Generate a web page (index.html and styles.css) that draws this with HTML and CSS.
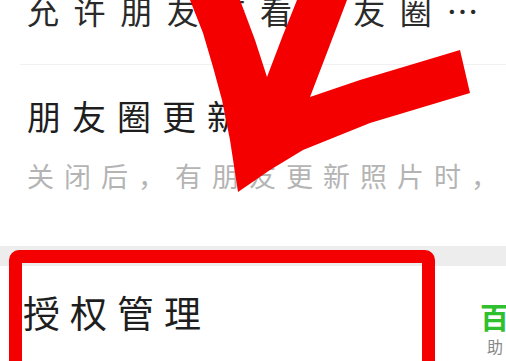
FILE: index.html
```html
<!DOCTYPE html>
<html lang="zh-CN">
<head>
<meta charset="utf-8">
<title>朋友圈设置</title>
<link rel="stylesheet" href="styles.css">
</head>
<body>
<div class="page">
  <section class="group">
    <div class="row row-first">
      <div class="row-text">允许朋友查看朋友圈…</div>
    </div>
    <div class="row row-second">
      <div class="title">朋友圈更新提醒</div>
      <div class="subtitle">关闭后，有朋友更新照片时，</div>
    </div>
  </section>
  <div class="gap"></div>
  <section class="group group-auth">
    <div class="auth-row">
      <div class="auth-title">授权管理</div>
      <div class="brand">
        <span class="brand-main">百</span>
        <span class="brand-sub">助</span>
      </div>
    </div>
  </section>

  <div class="mark-box"></div>
  <svg class="mark-arrow" width="506" height="361" viewBox="0 0 506 361" aria-hidden="true">
    <polygon points="190,0 203,33 213,67 222,100 230,140 238,192 270,170 303,150 370,123 470,93 460,50 400,68 360,80 310,97 328,50 347,0 297,0 283,35 267,77 255,40 240,0" />
  </svg>
</div>
</body>
</html>
```

FILE: styles.css
```css
* { box-sizing: border-box; }
html, body {
  margin: 0;
  padding: 0;
  width: 506px;
  height: 361px;
  overflow: hidden;
  background: #ffffff;
  font-family: "Noto Sans CJK SC", "Noto Sans", sans-serif;
}
.page {
  position: relative;
  width: 506px;
  height: 361px;
  overflow: hidden;
}
.group {
  background: #fff;
}
.row {
  padding-left: 27px;
  white-space: nowrap;
  overflow: hidden;
}
.row-first {
  height: 65px;
  margin-left: 20px;
  padding-left: 7px;
  border-bottom: 1px solid #f0f0f0;
}
.row-text {
  margin-top: -6px;
  font-size: 32px;
  line-height: 32px;
  letter-spacing: 14.6px;
  color: #2a2a2a;
}
.row-second {
  height: 181px;
  padding-top: 33px;
}
.title {
  font-size: 34px;
  line-height: 36px;
  letter-spacing: 11px;
  color: #1e1e1e;
}
.subtitle {
  margin-top: 27px;
  font-size: 27px;
  line-height: 30px;
  letter-spacing: 10px;
  color: #b4b4b4;
}
.gap {
  height: 20px;
  background: #ededed;
}
.auth-row {
  display: flex;
  align-items: flex-start;
  padding-left: 23px;
  padding-top: 28px;
  white-space: nowrap;
}
.auth-title {
  width: 457px;
  flex: none;
  font-size: 37px;
  line-height: 37px;
  letter-spacing: 10px;
  color: #1e1e1e;
}
.brand {
  display: flex;
  flex-direction: column;
  align-items: flex-start;
  padding-top: 7px;
}
.brand-main {
  font-size: 29px;
  line-height: 31px;
  font-weight: 700;
  color: #2fbf2f;
}
.brand-sub {
  margin-top: 5px;
  margin-left: 7px;
  font-size: 16px;
  line-height: 18px;
  color: #888;
}
.mark-box {
  position: absolute;
  left: 9px;
  top: 250px;
  width: 426px;
  height: 124px;
  border: 13px solid #f40000;
  border-radius: 10px;
}
.mark-arrow {
  position: absolute;
  left: 0;
  top: 0;
}
.mark-arrow polygon {
  fill: #f40000;
}
```
